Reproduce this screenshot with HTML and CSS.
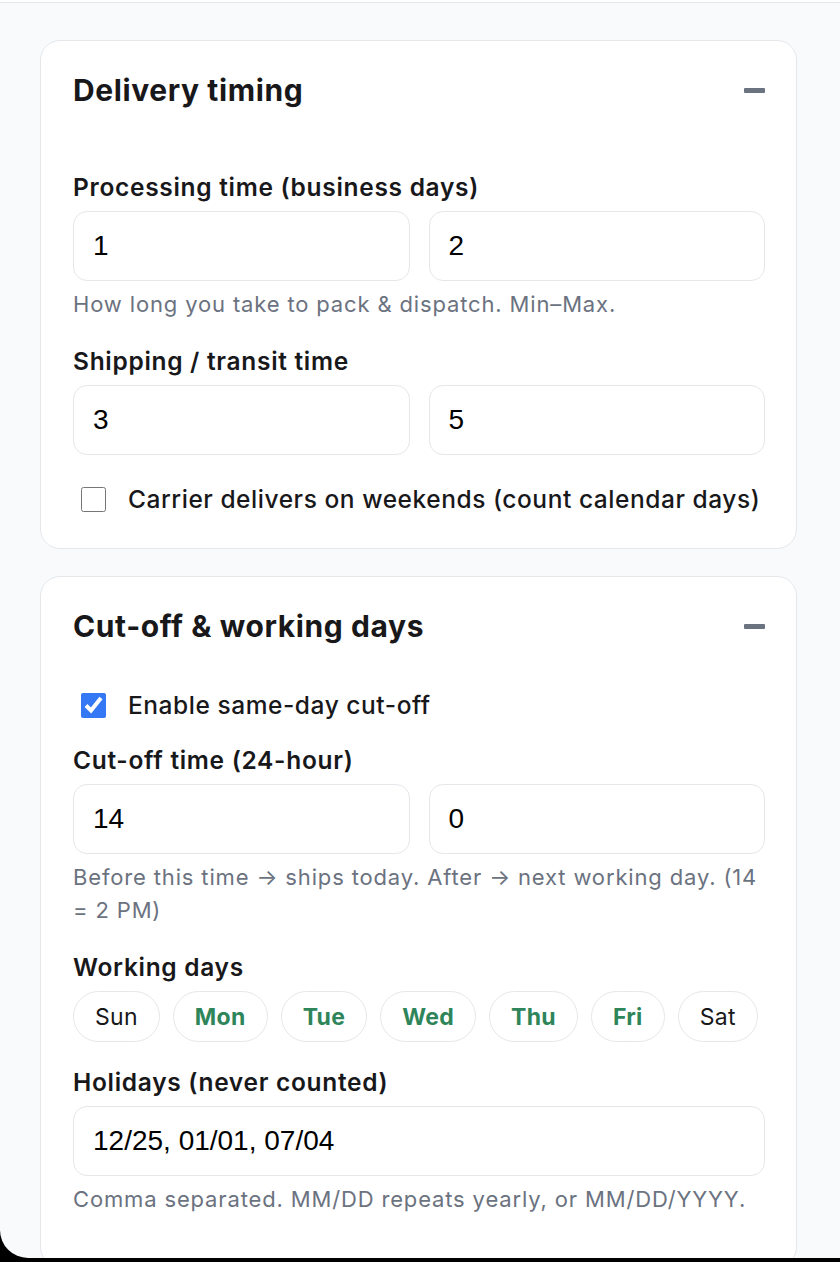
FILE: index.html
```html
<!DOCTYPE html>
<html lang="en">
<head>
    <meta charset="UTF-8">
    <title>Delivery settings</title>
    <link rel="stylesheet" href="styles.css">
</head>
<body>
<div class="topbar"></div>

<main class="page">
    <section class="card">
        <div class="card-head">
            <h2>Delivery timing</h2>
            <span class="collapse"></span>
        </div>
        <div class="card-body">
            <div class="field">
                <label class="label">Processing time (business days)</label>
                <div class="pair">
                    <input class="input" type="text" value="1">
                    <input class="input" type="text" value="2">
                </div>
                <p class="hint">How long you take to pack &amp; dispatch. Min–Max.</p>
            </div>
            <div class="field">
                <label class="label">Shipping / transit time</label>
                <div class="pair">
                    <input class="input" type="text" value="3">
                    <input class="input" type="text" value="5">
                </div>
            </div>
            <label class="toggle">
                <input type="checkbox">
                <span>Carrier delivers on weekends (count calendar days)</span>
            </label>
        </div>
    </section>

    <section class="card card-last">
        <div class="card-head">
            <h2>Cut-off &amp; working days</h2>
            <span class="collapse"></span>
        </div>
        <div class="card-body">
            <label class="toggle toggle-first">
                <input type="checkbox" checked>
                <span>Enable same-day cut-off</span>
            </label>
            <div class="field">
                <label class="label">Cut-off time (24-hour)</label>
                <div class="pair">
                    <input class="input" type="text" value="14">
                    <input class="input" type="text" value="0">
                </div>
                <p class="hint">Before this time → ships today. After → next working day. (14 = 2 PM)</p>
            </div>
            <div class="field">
                <label class="label">Working days</label>
                <div class="days">
                    <span class="day">Sun</span>
                    <span class="day on">Mon</span>
                    <span class="day on">Tue</span>
                    <span class="day on">Wed</span>
                    <span class="day on">Thu</span>
                    <span class="day on">Fri</span>
                    <span class="day">Sat</span>
                </div>
            </div>
            <div class="field">
                <label class="label">Holidays (never counted)</label>
                <input class="input" type="text" value="12/25, 01/01, 07/04">
                <p class="hint">Comma separated. MM/DD repeats yearly, or MM/DD/YYYY.</p>
            </div>
        </div>
    </section>
</main>

<div class="frame"></div>
</body>
</html>
```

FILE: styles.css
```css
body {
    margin: 0;
    background: #f9fafb;
    font-family: Inter, "Noto Sans", sans-serif;
    color: #18181b;
}

.topbar {
    height: 2px;
    background: #fff;
    border-bottom: 1px solid #e5e7eb;
}

.page {
    padding: 37px 43px 0 40px;
    display: flex;
    flex-direction: column;
    gap: 27px;
}

.card {
    background: #fff;
    border: 1px solid #e5e7eb;
    border-radius: 20px;
    padding: 31px 31px 34px 32px;
}

.card-last {
    padding-bottom: 50px;
}

.card-head {
    display: flex;
    align-items: center;
    justify-content: space-between;
    height: 36px;
    margin-bottom: 64px;
}

.card-head h2 {
    margin: 0;
    font-size: 30px;
    font-weight: 700;
    letter-spacing: 0.6px;
}

.collapse {
    width: 21px;
    height: 5px;
    background: #6b7280;
    border-radius: 1px;
}

.card-body {
    display: flex;
    flex-direction: column;
    gap: 25px;
}

.field {
    display: flex;
    flex-direction: column;
}

.label {
    font-size: 24.5px;
    font-weight: 600;
    line-height: 30px;
    letter-spacing: 0.7px;
    margin-bottom: 9px;
}

.pair {
    display: grid;
    grid-template-columns: 1fr 1fr;
    gap: 19px;
}

.input {
    box-sizing: border-box;
    width: 100%;
    height: 70px;
    border: 1.5px solid #e5e7eb;
    border-radius: 14px;
    padding: 0 19px;
    font-family: "Liberation Sans", Arial, sans-serif;
    font-size: 28px;
    color: #000;
    background: #fff;
    outline: 0;
}

.hint {
    margin: 7px 0 0 0;
    font-size: 22px;
    line-height: 33px;
    letter-spacing: 0.85px;
    color: #6b7280;
}

.toggle {
    display: flex;
    align-items: center;
    gap: 22px;
    font-size: 24.5px;
    font-weight: 500;
    line-height: 30px;
    letter-spacing: 0.55px;
    margin-top: 4px;
}

.toggle-first {
    margin-top: -18px;
}

.toggle input {
    width: 25px;
    height: 25px;
    margin: 0 0 0 8px;
    accent-color: #3478f6;
}

.days {
    display: flex;
    gap: 13px;
}

.day {
    box-sizing: border-box;
    height: 51px;
    padding: 0 21px;
    border: 1.5px solid #e5e7eb;
    border-radius: 26px;
    display: flex;
    align-items: center;
    font-size: 23px;
    letter-spacing: 0.3px;
}

.day.on {
    color: #2f855a;
    font-weight: 700;
}

/* window corner of the screenshot */
.frame {
    position: fixed;
    top: 0;
    left: 0;
    right: 0;
    bottom: 4px;
    border-bottom-left-radius: 28px;
    box-shadow: 0 0 0 40px #000;
    pointer-events: none;
}
```
